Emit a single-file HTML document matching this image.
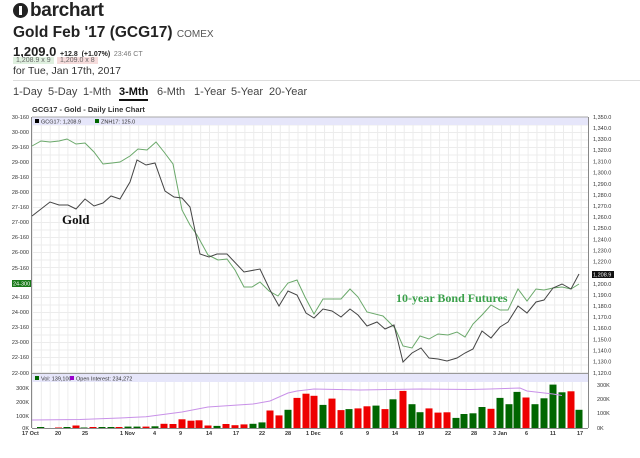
<!DOCTYPE html>
<html><head><meta charset="utf-8"><style>
body{margin:0;width:640px;height:458px;background:#fff;font-family:"Liberation Sans",sans-serif;position:relative;overflow:hidden;color:#222}
.a{position:absolute;white-space:nowrap}
</style></head><body>
<div class="a" style="left:13px;top:3px;width:15px;height:15px;border-radius:50%;background:#222"></div>
<div class="a" style="left:19px;top:6px;width:3px;height:9px;background:#fff"></div>
<div class="a" style="left:30px;top:0px;font-size:19px;font-weight:bold;letter-spacing:-0.3px">barchart</div>
<div class="a" style="left:13px;top:24px;font-size:15.5px;font-weight:bold">Gold Feb '17 (GCG17) <span style="font-size:10px;font-weight:normal;color:#555">COMEX</span></div>
<div class="a" style="left:13px;top:44px;font-size:13px;font-weight:bold">1,209.0 <span style="font-size:7px">+12.8 &nbsp;(+1.07%)</span> <span style="font-size:7px;font-weight:normal;color:#777">23:46 CT</span></div>
<div class="a" style="left:13px;top:57px;font-size:7px;color:#666;background:#dff0df;padding:0 3px">1,208.9 x 9</div>
<div class="a" style="left:57px;top:57px;font-size:7px;color:#666;background:#f6dcdc;padding:0 3px">1,209.0 x 8</div>
<div class="a" style="left:13px;top:65px;font-size:10.5px;color:#333">for Tue, Jan 17th, 2017</div>
<div class="a" style="left:13px;top:80px;width:627px;height:1px;background:#ddd"></div>
<div class="a" style="left:13px;top:86px;font-size:11px;color:#444;word-spacing:0">1-Day</div>
<div class="a" style="left:48px;top:86px;font-size:11px;color:#444">5-Day</div>
<div class="a" style="left:83px;top:86px;font-size:11px;color:#444">1-Mth</div>
<div class="a" style="left:119px;top:86px;font-size:11px;color:#111;font-weight:bold;border-bottom:2px solid #111;padding-bottom:1px">3-Mth</div>
<div class="a" style="left:157px;top:86px;font-size:11px;color:#444">6-Mth</div>
<div class="a" style="left:194px;top:86px;font-size:11px;color:#444">1-Year</div>
<div class="a" style="left:231px;top:86px;font-size:11px;color:#444">5-Year</div>
<div class="a" style="left:269px;top:86px;font-size:11px;color:#444">20-Year</div>
<div class="a" style="left:32px;top:105px;font-size:7.5px;font-weight:bold;color:#333">GCG17 - Gold - Daily Line Chart</div>

<svg class="a" style="left:0;top:0" width="640" height="458" viewBox="0 0 640 458" font-family="Liberation Sans, sans-serif">
<defs>
<pattern id="vg" x="32" y="0" width="8.85" height="458" patternUnits="userSpaceOnUse"><line x1="0.5" y1="0" x2="0.5" y2="458" stroke="#ececec" stroke-width="1"/></pattern>
<pattern id="hg" x="0" y="117" width="640" height="7.5" patternUnits="userSpaceOnUse"><line x1="0" y1="0.5" x2="640" y2="0.5" stroke="#ececec" stroke-width="1"/></pattern>
</defs>
<rect x="32" y="117" width="556" height="256" fill="url(#vg)"/>
<rect x="32" y="117" width="556" height="256" fill="url(#hg)"/>
<rect x="32" y="374" width="556" height="54" fill="url(#vg)"/>
<rect x="32" y="117" width="556" height="8" fill="#e6e6fa"/>
<rect x="32" y="374" width="556" height="8" fill="#e6e6fa"/>
<line x1="32" y1="117" x2="588" y2="117" stroke="#aaa"/>
<line x1="31.5" y1="117" x2="31.5" y2="428" stroke="#888"/>
<line x1="588.5" y1="117" x2="588.5" y2="428" stroke="#888"/>
<line x1="32" y1="373.5" x2="588" y2="373.5" stroke="#999"/>
<line x1="32" y1="428.5" x2="588" y2="428.5" stroke="#888"/>
<rect x="35" y="119" width="4" height="4" fill="#000"/><text x="41" y="123.5" font-size="5.5" fill="#333">GCG17: 1,208.9</text>
<rect x="95" y="119" width="4" height="4" fill="#060"/><text x="101" y="123.5" font-size="5.5" fill="#333">ZNH17: 125.0</text>
<rect x="35" y="376" width="4" height="4" fill="#060"/><text x="41" y="380.5" font-size="5.5" fill="#333">Vol: 139,100</text>
<rect x="70" y="376" width="4" height="4" fill="#90c"/><text x="76" y="380.5" font-size="5.5" fill="#333">Open Interest: 234,272</text>

<g font-size="5.5" fill="#333" text-anchor="end">
<text x="29" y="119">30-160</text><text x="29" y="134">30-000</text><text x="29" y="149">29-160</text><text x="29" y="164">29-000</text><text x="29" y="179">28-160</text><text x="29" y="194">28-000</text><text x="29" y="209">27-160</text><text x="29" y="224">27-000</text><text x="29" y="239">26-160</text><text x="29" y="254">26-000</text><text x="29" y="270">25-160</text><text x="29" y="299">24-160</text><text x="29" y="314">24-000</text><text x="29" y="329">23-160</text><text x="29" y="344">23-000</text><text x="29" y="359">22-160</text><text x="29" y="375">22-000</text>
<text x="29" y="390">300K</text><text x="29" y="404">200K</text><text x="29" y="418">100K</text><text x="29" y="430">0K</text>
</g>
<rect x="12" y="280" width="19" height="7" fill="#1a7a1a"/><text x="13" y="285.5" font-size="5.5" fill="#fff">24-300</text>
<g font-size="5.5" fill="#333">
<text x="593" y="119">1,350.0</text><text x="593" y="130">1,340.0</text><text x="593" y="141">1,330.0</text><text x="593" y="152">1,320.0</text><text x="593" y="163.5">1,310.0</text><text x="593" y="174.5">1,300.0</text><text x="593" y="186">1,290.0</text><text x="593" y="197">1,280.0</text><text x="593" y="208">1,270.0</text><text x="593" y="219">1,260.0</text><text x="593" y="230">1,250.0</text><text x="593" y="241.5">1,240.0</text><text x="593" y="252.5">1,230.0</text><text x="593" y="263.5">1,220.0</text><text x="593" y="286">1,200.0</text><text x="593" y="297">1,190.0</text><text x="593" y="308">1,180.0</text><text x="593" y="319">1,170.0</text><text x="593" y="330">1,160.0</text><text x="593" y="341.5">1,150.0</text><text x="593" y="352.5">1,140.0</text><text x="593" y="363.5">1,130.0</text><text x="593" y="375">1,120.0</text>
<text x="597" y="387">300K</text><text x="597" y="401">200K</text><text x="597" y="415">100K</text><text x="597" y="430">0K</text>
</g>
<rect x="592" y="271" width="22" height="7" fill="#111"/><text x="593" y="276.5" font-size="5.5" fill="#fff">1,208.9</text>

<polyline fill="none" stroke="#6aa86a" stroke-width="1" points="32,146 41,141 50,142 59,141 67,139 76,144 85,143 94,152 103,164 112,163 120,162 130,156 138,149 147,150 156,142 164,152 173,164 182,210 190,225 197,235 208,255 218,260 227,259 235,270 244,287 252,287 260,282 269,291 278,296 288,283 297,280 305,297 314,314 323,299 341,299 350,289 358,297 367,312 383,316 395,328 403,346 412,348 420,336 429,339 438,334 448,335 457,332 465,337 473,324 482,315 491,305 500,310 508,310 518,289 527,301 536,289 544,290 553,288 562,287 571,289 579,284"/>
<polyline fill="none" stroke="#444" stroke-width="1" points="32,216 50,202 59,205 68,205 76,209 85,199 94,206 103,203 111,196 120,199 130,182 137,160 146,165 155,163 165,191 174,197 182,198 190,207 200,254 209,257 217,254 227,254 244,272 260,269 270,290 279,306 288,291 297,295 306,313 314,318 323,309 332,311 341,317 350,309 358,315 367,326 377,322 385,329 394,325 403,362 412,353 421,348 429,358 438,359 447,361 457,358 465,353 473,349 482,331 491,338 500,327 508,322 518,306 527,313 536,302 544,300 553,288 562,284 571,289 579,274"/>
<text x="62" y="224" font-family="Liberation Serif, serif" font-weight="bold" font-size="13" fill="#111">Gold</text>
<text x="396" y="302" font-family="Liberation Serif, serif" font-weight="bold" font-size="12" fill="#3aa04a">10-year Bond Futures</text>

<g stroke="#bbb" stroke-width="0.5">
<rect x="37.5" y="427.3" width="7" height="0.7" fill="#060"/>
</g>
<g id="bars"></g>
<g>
<rect x="37" y="427" width="7" height="1" fill="#060"/>
<rect x="55" y="427.5" width="7" height="0.5" fill="#e00"/>
<rect x="63.5" y="427" width="7" height="1" fill="#060"/>
<rect x="72.5" y="425.5" width="7" height="2.5" fill="#e00"/>
<rect x="80.5" y="427.5" width="7" height="0.5" fill="#060"/>
<rect x="89.5" y="427" width="7" height="1" fill="#e00"/>
<rect x="98.5" y="427" width="7" height="1" fill="#060"/>
<rect x="107.5" y="427" width="7" height="1" fill="#060"/>
<rect x="115.5" y="427" width="7" height="1" fill="#e00"/>
<rect x="124.5" y="426.6" width="7" height="1.4" fill="#060"/>
<rect x="133.5" y="426.6" width="7" height="1.4" fill="#060"/>
<rect x="142.5" y="426.6" width="7" height="1.4" fill="#e00"/>
<rect x="151.5" y="426.3" width="7" height="1.7" fill="#060"/>
<rect x="160.5" y="423.8" width="7" height="4.2" fill="#e00"/>
<rect x="169.5" y="424" width="7" height="4" fill="#e00"/>
<rect x="178.5" y="419.3" width="7" height="8.7" fill="#e00"/>
<rect x="187.5" y="420.7" width="7" height="7.3" fill="#e00"/>
<rect x="195.5" y="420.3" width="7" height="7.7" fill="#e00"/>
<rect x="204.5" y="425.5" width="7" height="2.5" fill="#e00"/>
<rect x="213.5" y="425.9" width="7" height="2.1" fill="#060"/>
<rect x="222.5" y="424" width="7" height="4" fill="#e00"/>
<rect x="231.5" y="425.2" width="7" height="2.8" fill="#e00"/>
<rect x="240.5" y="424.4" width="7" height="3.6" fill="#e00"/>
<rect x="249.5" y="423.8" width="7" height="4.2" fill="#060"/>
<rect x="258.5" y="422.4" width="7" height="5.6" fill="#060"/>
<rect x="266.5" y="410.5" width="7" height="17.5" fill="#e00"/>
<rect x="275.5" y="415.4" width="7" height="12.6" fill="#e00"/>
<rect x="284.5" y="409.8" width="7" height="18.2" fill="#060"/>
<rect x="293.5" y="397.9" width="7" height="30.1" fill="#e00"/>
<rect x="302.5" y="393.7" width="7" height="34.3" fill="#e00"/>
<rect x="310.5" y="395.8" width="7" height="32.2" fill="#e00"/>
<rect x="319.5" y="404.9" width="7" height="23.1" fill="#060"/>
<rect x="328.5" y="398.6" width="7" height="29.4" fill="#e00"/>
<rect x="337.5" y="410.1" width="7" height="17.9" fill="#e00"/>
<rect x="345.5" y="409.1" width="7" height="18.9" fill="#060"/>
<rect x="354.5" y="408.4" width="7" height="19.6" fill="#e00"/>
<rect x="363.5" y="406.3" width="7" height="21.7" fill="#e00"/>
<rect x="372.5" y="405.6" width="7" height="22.4" fill="#060"/>
<rect x="381.5" y="409.1" width="7" height="18.9" fill="#e00"/>
<rect x="389.5" y="399.3" width="7" height="28.7" fill="#060"/>
<rect x="399.5" y="390.9" width="7" height="37.1" fill="#e00"/>
<rect x="408.5" y="404.2" width="7" height="23.8" fill="#060"/>
<rect x="416.5" y="412.2" width="7" height="15.8" fill="#060"/>
<rect x="425.5" y="408.4" width="7" height="19.6" fill="#e00"/>
<rect x="434.5" y="412.6" width="7" height="15.4" fill="#e00"/>
<rect x="443.5" y="412.3" width="7" height="15.7" fill="#e00"/>
<rect x="452.5" y="417.9" width="7" height="10.1" fill="#060"/>
<rect x="460.5" y="414" width="7" height="14" fill="#060"/>
<rect x="469.5" y="413.3" width="7" height="14.7" fill="#060"/>
<rect x="478.5" y="407" width="7" height="21" fill="#060"/>
<rect x="487.5" y="408.8" width="7" height="19.2" fill="#e00"/>
<rect x="496.5" y="397.9" width="7" height="30.1" fill="#060"/>
<rect x="505.5" y="404.2" width="7" height="23.8" fill="#060"/>
<rect x="513.5" y="391.9" width="7" height="36.1" fill="#060"/>
<rect x="522.5" y="397.5" width="7" height="30.5" fill="#e00"/>
<rect x="531.5" y="404.2" width="7" height="23.8" fill="#060"/>
<rect x="540.5" y="398.3" width="7" height="29.7" fill="#060"/>
<rect x="549.5" y="384.6" width="7" height="43.4" fill="#060"/>
<rect x="558.5" y="392.3" width="7" height="35.7" fill="#060"/>
<rect x="567.5" y="391.3" width="7" height="36.7" fill="#e00"/>
<rect x="575.5" y="409.8" width="7" height="18.2" fill="#060"/>
</g>
<polyline fill="none" stroke="#c890e8" stroke-width="1" points="32,420 80,419.5 120,418 146,416.7 182,412 208,407 253,404 270,401 288,393 297,391 314,389 360,390 420,389 470,389.5 490,389 520,388 527,391 553,394 562,395.5"/>
<g font-size="5.5" font-weight="bold" fill="#333">
<text x="22" y="435">17 Oct</text><text x="55" y="435">20</text><text x="82" y="435">25</text><text x="120" y="435">1 Nov</text><text x="153" y="435">4</text><text x="179" y="435">9</text><text x="206" y="435">14</text><text x="233" y="435">17</text><text x="259" y="435">22</text><text x="285" y="435">28</text><text x="306" y="435">1 Dec</text><text x="340" y="435">6</text><text x="366" y="435">9</text><text x="392" y="435">14</text><text x="418" y="435">19</text><text x="445" y="435">22</text><text x="471" y="435">28</text><text x="493" y="435">3 Jan</text><text x="525" y="435">6</text><text x="550" y="435">11</text><text x="577" y="435">17</text>
</g>
</svg>
</body></html>
